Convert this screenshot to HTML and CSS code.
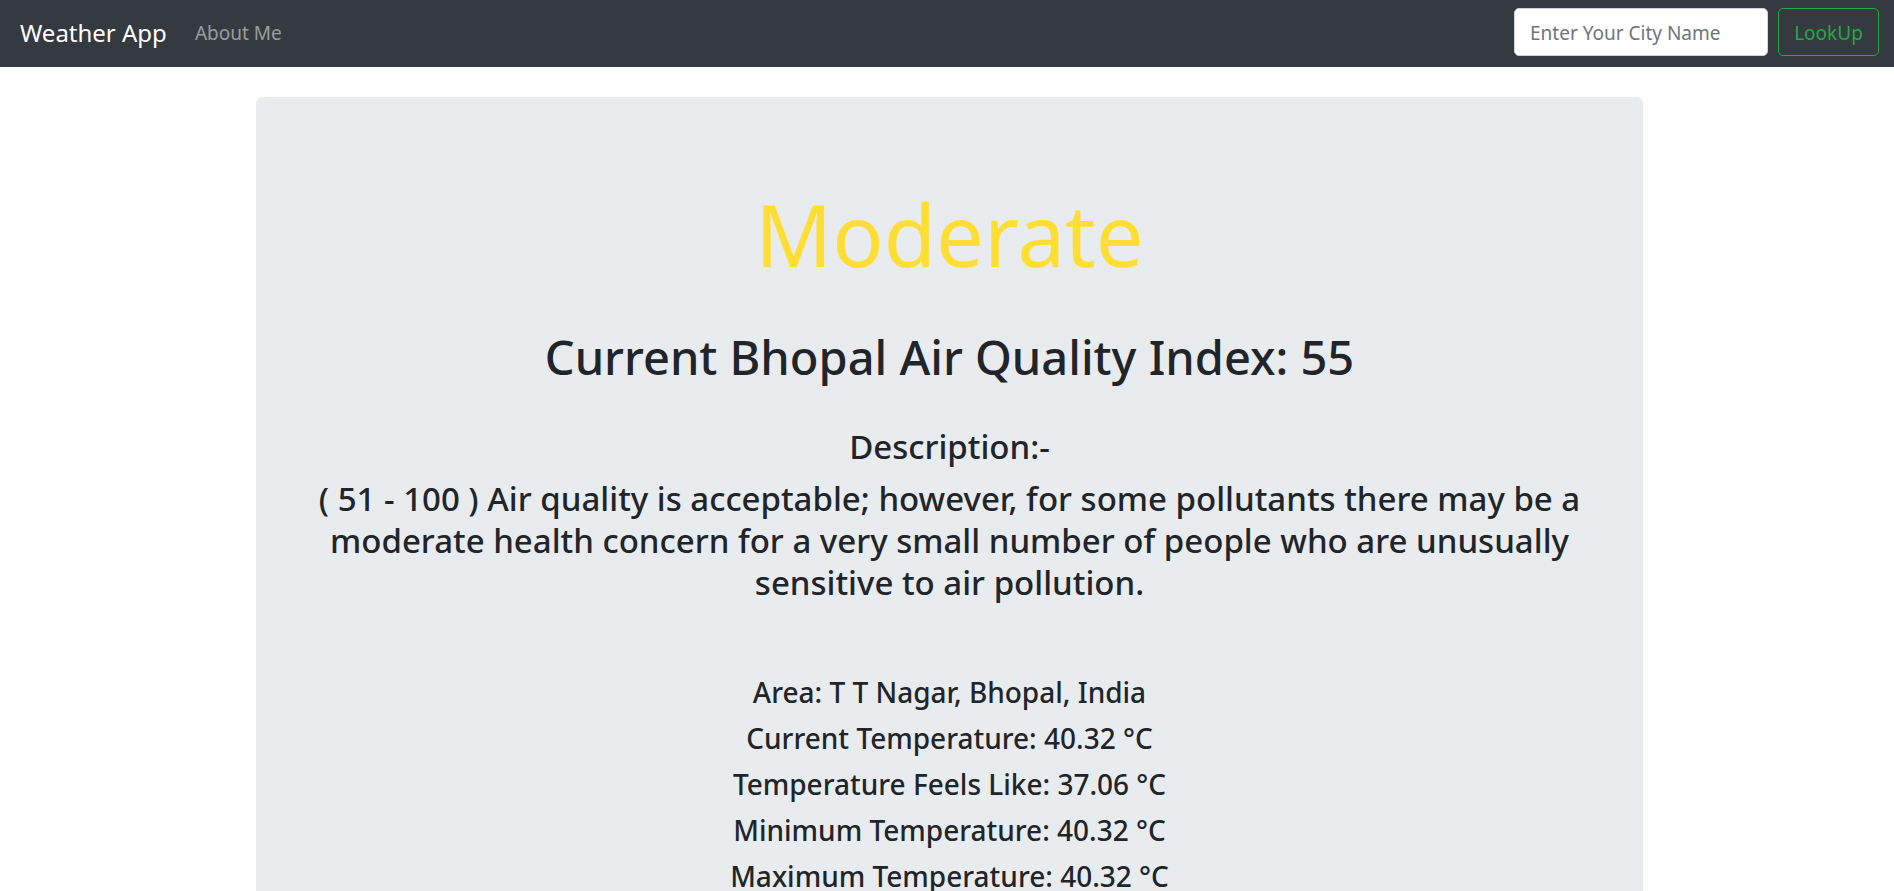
FILE: index.html
```html
<!DOCTYPE html>
<html lang="en">
<head>
  <meta charset="utf-8">
  <meta name="viewport" content="width=device-width, initial-scale=1">
  <title>Weather App</title>
  <link rel="stylesheet" href="styles.css">
</head>
<body>
  <nav class="navbar">
    <a class="navbar-brand" href="#">Weather App</a>
    <a class="nav-link" href="#">About Me</a>
    <form class="search-form">
      <input class="search-input" type="search" placeholder="Enter Your City Name" aria-label="Enter Your City Name">
      <button class="search-button" type="submit">LookUp</button>
    </form>
  </nav>
  <main class="container">
    <section class="jumbotron">
      <h1 class="status">Moderate</h1>
      <h1 class="index">Current Bhopal Air Quality Index: 55</h1>
      <h3 class="description">Description:-</h3>
      <h3 class="description">( 51 - 100 ) Air quality is acceptable; however, for some pollutants there may be a moderate health concern for a very small number of people who are unusually sensitive to air pollution.</h3>
      <div class="readings">
        <h4 class="reading">Area: T T Nagar, Bhopal, India</h4>
        <h4 class="reading">Current Temperature: 40.32 °C</h4>
        <h4 class="reading">Temperature Feels Like: 37.06 °C</h4>
        <h4 class="reading">Minimum Temperature: 40.32 °C</h4>
        <h4 class="reading">Maximum Temperature: 40.32 °C</h4>
      </div>
    </section>
  </main>
</body>
</html>
```

FILE: styles.css
```css
*,
*::before,
*::after {
  box-sizing: border-box;
}

html {
  overflow-x: hidden;
  scrollbar-width: none;
}

body {
  margin: 0;
  background: #fff;
  color: #212529;
  font-family: "Segoe UI", "Noto Sans", "Open Sans", sans-serif;
  font-size: 19px;
  line-height: 30px;
}

.navbar {
  display: flex;
  align-items: center;
  padding: 8px 15px 11px 20px;
  background: #343a40;
}

.navbar-brand {
  margin-right: 28px;
  padding-top: 2px;
  color: #fff;
  font-size: 24px;
  text-decoration: none;
}

.nav-link {
  padding-top: 2px;
  color: rgba(255, 255, 255, 0.5);
  text-decoration: none;
}

.search-form {
  display: flex;
  gap: 10px;
  margin-left: auto;
}

.search-input,
.search-button {
  height: 48px;
  padding: 2px 15px 0;
  border: 1px solid #ced4da;
  border-radius: 5px;
  font: inherit;
}

.search-input {
  width: 254px;
  background: #fff;
  color: #495057;
}

.search-input::placeholder {
  color: #6c757d;
  opacity: 1;
}

.search-button {
  width: 101px;
  border-color: #28a745;
  background: transparent;
  color: #28a745;
}

.container {
  max-width: 1430px;
  margin: 30px auto 0;
  padding: 0 19px 0 24px;
}

.jumbotron {
  padding: 83px 40px 80px;
  border-radius: 6px;
  background: #e9ecef;
  text-align: center;
}

.status,
.index,
.description,
.reading {
  margin: 0 0 10px;
  font-weight: 550;
}

.status {
  margin-bottom: 39px;
  color: #ffde33;
  font-size: 85px;
  font-weight: 400;
  line-height: 108px;
}

.index {
  margin-bottom: 39px;
  font-size: 47px;
  line-height: 60px;
}

.description {
  font-size: 33px;
  line-height: 42px;
}

.readings {
  margin-top: 70px;
}

.reading {
  font-size: 28px;
  line-height: 36px;
}
```
